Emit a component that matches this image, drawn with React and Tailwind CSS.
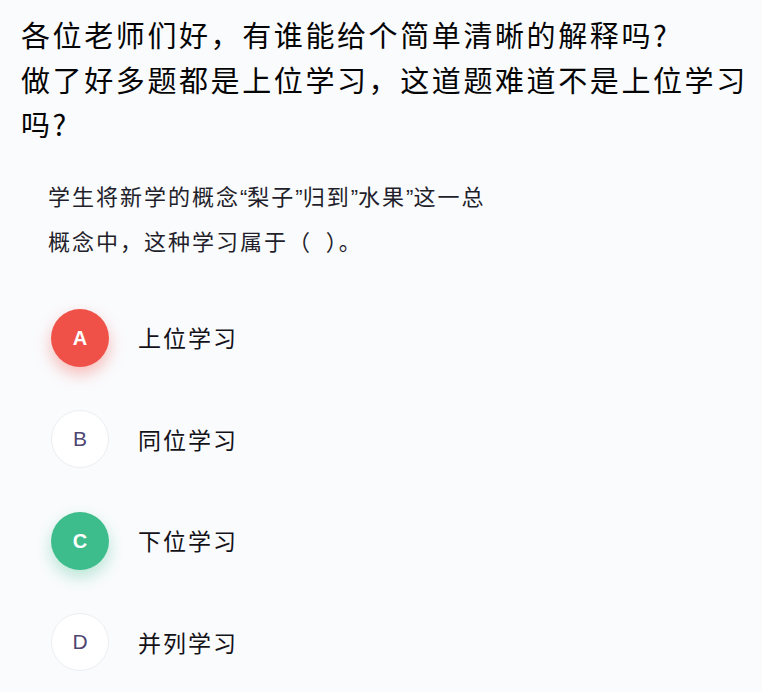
import React from "react";

const FONT = { fontFamily: '"Noto Sans CJK SC", "Noto Sans", sans-serif' };

function Q({ children }) {
  return <span className="[font-family:'Liberation_Sans',sans-serif] tracking-normal">{children}</span>;
}

function Option({ letter, text, variant }) {
  let circle = "bg-white border border-[#eceef4] text-[#4f4672] font-normal text-[21px]";
  if (variant === "red") circle = "bg-[#ef5148] text-white font-bold text-[20px] shadow-[0_7px_16px_rgba(239,81,72,0.38)]";
  if (variant === "green") circle = "bg-[#3dbd8b] text-white font-bold text-[20px] shadow-[0_7px_16px_rgba(61,189,139,0.35)]";
  return (
    <div className="flex items-center h-[58px]">
      <div className={`w-[58px] h-[58px] rounded-full flex items-center justify-center [font-family:'Liberation_Sans',sans-serif] ${circle}`}>
        {letter}
      </div>
      <div className="ml-[29px] text-[23px] tracking-[2px] text-[#141219]">{text}</div>
    </div>
  );
}

export default function App() {
  return (
    <div className="w-[762px] h-[692px] bg-[#fafbfd] overflow-hidden" style={FONT}>
      <div className="pl-[21px] pt-[12px] text-[29px] leading-[44.5px] tracking-[2.6px] text-[#050505] font-normal whitespace-nowrap">
        <div>各位老师们好，有谁能给个简单清晰的解释吗?</div>
        <div>做了好多题都是上位学习，这道题难道不是上位学习</div>
        <div>吗?</div>
      </div>
      <div className="pl-[48px] mt-[28px] text-[22px] leading-[43px] tracking-[2px] text-[#231e2b] whitespace-nowrap">
        <div>
          学生将新学的概念<Q>“</Q>梨子<Q>”</Q>归到<Q>”</Q>水果<Q>”</Q>这一总
        </div>
        <div>概念中，这种学习属于（&nbsp;&nbsp;）。</div>
      </div>
      <div className="pl-[51px] mt-[47px] flex flex-col gap-[43.5px]">
        <Option letter="A" text="上位学习" variant="red" />
        <Option letter="B" text="同位学习" />
        <Option letter="C" text="下位学习" variant="green" />
        <Option letter="D" text="并列学习" />
      </div>
    </div>
  );
}
